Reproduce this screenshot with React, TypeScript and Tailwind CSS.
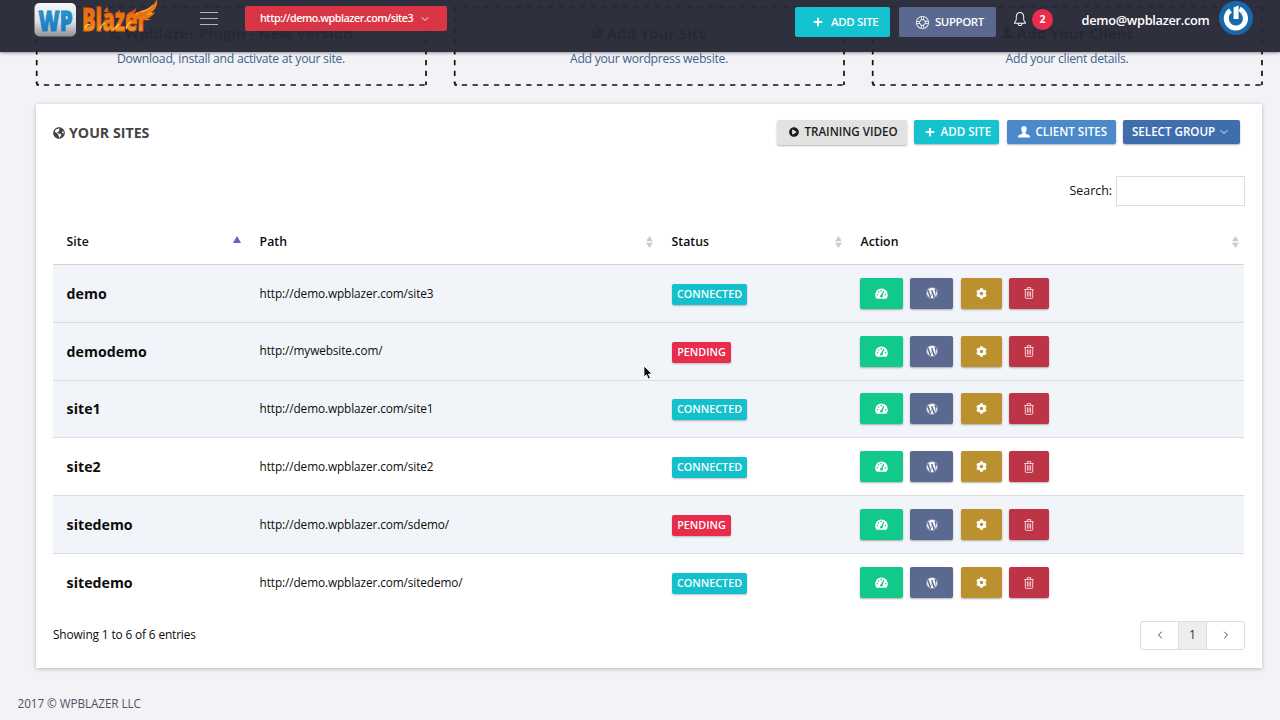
import React from "react";
import { FaPlus, FaWordpress, FaCog, FaPlayCircle, FaGlobeAmericas, FaDownload } from "react-icons/fa";
import { SlSupport, SlBell } from "react-icons/sl";

function Logo() {
  return (
    <svg className="block h-[40px] w-[126px] shrink-0 overflow-visible" viewBox="0 0 126 40" aria-label="WP Blazer">
      <defs>
        <linearGradient id="tile" x1="0" y1="0" x2="0" y2="1">
          <stop offset="0" stopColor="#f4f5f6" />
          <stop offset="0.55" stopColor="#dfe1e3" />
          <stop offset="1" stopColor="#909296" />
        </linearGradient>
        <linearGradient id="blue" x1="0" y1="0" x2="0" y2="1">
          <stop offset="0" stopColor="#2fa0dc" />
          <stop offset="1" stopColor="#1672b8" />
        </linearGradient>
        <linearGradient id="fire" x1="0" y1="0" x2="0" y2="1">
          <stop offset="0" stopColor="#e2600f" />
          <stop offset="0.6" stopColor="#f07a12" />
          <stop offset="1" stopColor="#fbb52a" />
        </linearGradient>
      </defs>
      <rect x="0.5" y="3" width="41.5" height="33.500" rx="5" fill="url(#tile)" />
      <path d="M98 18 C101 11 108 11 113 9 C118 7 121 3 123 -1 C124 6 121 10 117 13 L121 12 C119 16 116 17 113 19 L117 19 C114 21 112 20 110 20 L98 18 Z" fill="#ee7414" />
      <path d="M92 16 C94 11 99 12 102 8 C102 14 98 15 97 19 Z" fill="#d94e10" />
      <path d="M100 16 C104 11 111 13 119 5 M106 16 C109 14 113 15 118 13" stroke="#ffc33c" strokeWidth="1" fill="none" />
      <path d="M70 12 q1 -4 4 -5 q-1 3 1 5 M82 15 q1 -4 4 -5 q-1 3 1 5" fill="#e2600f" />
      <text x="4.500" y="31" fontFamily="'Open Sans',sans-serif" fontWeight="800" fontSize="28" textLength="34" lengthAdjust="spacingAndGlyphs" fill="url(#blue)" stroke="#1b80c4" strokeWidth="0.900">WP</text>
      <g fontFamily="'Open Sans',sans-serif" fontWeight="800" fill="url(#fire)" stroke="#e06411" strokeWidth="0.900">
        <text x="48" y="31" fontSize="31" textLength="65" lengthAdjust="spacingAndGlyphs">Blazer</text>
      </g>
      <path d="M51 28 q2 -5 5 -3 M66 29 q2 -5 5 -6 M79 30 l6 -6 M92 29 q1 -5 5 -7" stroke="#ffd04a" strokeWidth="1.200" fill="none" />
    </svg>
  );
}

function Chevron({ className }: { className: string }) {
  return (
    <svg className={className} viewBox="0 0 8 8" fill="none" stroke="currentColor" strokeWidth="0.900" strokeLinecap="round">
      <path d="M1 2.500 4 5.500 7 2.500" />
    </svg>
  );
}

function PersonIcon({ className }: { className: string }) {
  return (
    <svg className={className} viewBox="0 0 12 12" fill="currentColor">
      <path d="M6 0C4.200 0 3.300 1.300 3.300 3.100c0 1.300.5 2.500 1.200 3.300.2.6.1 1.100-.4 1.400L1.200 9C.4 9.400 0 10 0 11v.6h12V11c0-1-.4-1.600-1.200-2L7.900 7.800c-.5-.3-.6-.8-.4-1.400.7-.8 1.200-2 1.200-3.300C8.700 1.300 7.800 0 6 0Z" />
    </svg>
  );
}

function GaugeIcon() {
  return (
    <svg className="h-[11px] w-[13px]" viewBox="0 0 13 11">
      <path d="M6.500 .5A6.300 6.300 0 0 0 .2 6.800c0 1.300.3 2.400.9 3.400.3.300.6.500 1 .500h8.800c.4 0 .7-.2 1-.5.600-1 .900-2.100.900-3.400A6.300 6.300 0 0 0 6.500 .5Z" fill="#fff" />
      <g fill="#10c98b">
        <circle cx="2.500" cy="6.800" r=".8" />
        <circle cx="3.600" cy="4" r=".8" />
        <circle cx="6.200" cy="2.600" r=".8" />
        <circle cx="10.500" cy="6.800" r=".8" />
        <circle cx="6.400" cy="8.200" r="1.300" />
        <path d="M5.900 7.600 8.300 2.800l1 .4-2 5Z" />
      </g>
    </svg>
  );
}

function TrashIcon() {
  return (
    <svg className="h-[12px] w-[10px]" viewBox="0 0 10 12" fill="none" stroke="#f9dfe3" strokeWidth="0.900">
      <path d="M.3 2.500h9.400M3.300 2.300V.6h3.400v1.700M1.300 2.700v7.800c0 .5.300.9.800.9h5.800c.5 0 .8-.4.800-.9V2.700M3.400 4.300v5.300M5 4.300v5.300M6.600 4.300v5.300" />
    </svg>
  );
}

function Sorter() {
  return (
    <svg className="h-[12px] w-[7px]" viewBox="0 0 7 12" fill="#ccc">
      <path d="M3.500 0 7 5.300H0ZM0 6.700h7L3.500 12Z" />
    </svg>
  );
}

function DashedFrame() {
  return (
    <svg className="pointer-events-none absolute inset-0 h-[80px] w-[392px]" viewBox="0 0 392 80" fill="none" stroke="#111" strokeWidth="1.700" strokeDasharray="5.300 5.430">
      <path d="M1.500 1H391" strokeDashoffset="3.400" />
      <path d="M1.500 79H391" strokeDashoffset="3.400" />
      <path d="M1.700 1V77" strokeDashoffset="0.600" />
      <path d="M391 1V79" strokeDashoffset="0.600" />
      <path d="M1.500 76q0 2.500 2.500 3" strokeDasharray="none" />
    </svg>
  );
}

const promos = [
  { icon: "download", title: "Wpblazer Plugin - New Version", text: "Download, install and activate at your site." },
  { icon: "globe", title: "Add Your Site", text: "Add your wordpress website." },
  { icon: "person", title: "Add Your Client", text: "Add your client details." },
];

const sites = [
  { name: "demo", path: "http://demo.wpblazer.com/site3", connected: true, shaded: true },
  { name: "demodemo", path: "http://mywebsite.com/", connected: false, shaded: true },
  { name: "site1", path: "http://demo.wpblazer.com/site1", connected: true, shaded: true },
  { name: "site2", path: "http://demo.wpblazer.com/site2", connected: true, shaded: false },
  { name: "sitedemo", path: "http://demo.wpblazer.com/sdemo/", connected: false, shaded: true },
  { name: "sitedemo", path: "http://demo.wpblazer.com/sitedemo/", connected: true, shaded: false },
];

const columns = "grid grid-cols-[193px_412px_189px_397px]";
const headCell = "flex items-center justify-between pr-[5px] pl-[13.600px]";
const action = "flex h-[31px] items-center justify-center rounded-[2px] text-white shadow-[0_1px_2px_rgba(0,0,0,0.3)]";

export default function App() {
  return (
    <div className="relative h-[720px] w-[1280px] overflow-hidden bg-[#f2f2f7] font-['Open_Sans',sans-serif] text-[12.300px] text-[#0c0c0c]">
      <header className="absolute inset-x-0 top-0 z-10 flex h-[52px] items-start bg-[#262835]/96 pl-[34px] text-white shadow-[0_1px_3px_rgba(0,0,0,0.4)]">
        <Logo />
        <div className="mt-[12px] ml-[40px] flex h-[13px] w-[18px] flex-col justify-between">
          <span className="h-px bg-[#b4b6bd]" />
          <span className="h-px bg-[#b4b6bd]" />
          <span className="h-px bg-[#b4b6bd]" />
        </div>
        <button className="mt-[6px] ml-[27px] flex h-[25px] w-[202px] items-center rounded-[2px] bg-[#d93544] pl-[15px] text-[10.800px] font-semibold tracking-[-0.500px]">
          <span className="w-[153px] text-left whitespace-nowrap">http://demo.wpblazer.com/site3</span>
          <Chevron className="ml-[8px] size-[8px]" />
        </button>
        <button className="mt-[7px] ml-[348px] flex h-[30px] w-[95px] items-center rounded-[2px] bg-[#14c3cf] pl-[18px] text-[11.500px] font-semibold tracking-[-0.350px]">
          <FaPlus className="mr-[8px] size-[10px]" />
          <span className="whitespace-nowrap">ADD SITE</span>
        </button>
        <button className="mt-[7px] ml-[9px] flex h-[30px] w-[97px] items-center rounded-[2px] bg-[#5b6990] pl-[17px] text-[11.500px] font-semibold tracking-[-0.450px]">
          <SlSupport className="mr-[6px] size-[13px]" />
          <span className="whitespace-nowrap">SUPPORT</span>
        </button>
        <SlBell className="mt-[12px] ml-[17px] size-[14px]" />
        <span className="mt-[9px] ml-[5px] flex size-[21px] items-center justify-center rounded-full bg-[#ed2b4c] text-[10.500px] font-bold">2</span>
        <span className="mt-[11px] ml-[28.500px] w-[130px] text-[12.800px] leading-[18px] font-semibold tracking-[-0.300px] whitespace-nowrap">demo@wpblazer.com</span>
        <svg className="mt-[1px] ml-[7.500px] size-[34px]" viewBox="0 0 34 34">
          <circle cx="17" cy="17" r="17" fill="#1769ab" />
          <path d="M11.500 9.500A9.600 9.600 0 1 0 24 11" fill="none" stroke="#fff" strokeWidth="5" />
          <path d="M24 11Q22.500 8.800 20.500 8" fill="none" stroke="#fff" strokeWidth="5" />
          <path d="M14.600 6.500l5-2v13.500h-5Z" fill="#fff" />
        </svg>
      </header>

      <section className="flex gap-[26px] pt-[6px] pl-[35px]">
        {promos.map((p) => (
          <div key={p.title} className="relative h-[81px] w-[392px] shrink-0 pt-[17px] text-center">
            <DashedFrame />
            <h3 className="flex h-[20px] items-center justify-center gap-[4px] text-[15px] font-bold text-[#333]">
              {p.icon === "download" && <FaDownload className="size-[12px]" />}
              {p.icon === "globe" && <FaGlobeAmericas className="size-[12px]" />}
              {p.icon === "person" && <PersonIcon className="size-[12px]" />}
              {p.title}
            </h3>
            <p className="mt-[7px] text-[12.200px] leading-[18px] tracking-[-0.260px] text-[#3f628a]">{p.text}</p>
          </div>
        ))}
      </section>

      <main className="mt-[17px] ml-[36px] flex h-[564px] w-[1226px] flex-col bg-white px-[17px] shadow-[0_1px_4px_rgba(0,0,0,0.25)]">
        <div className="flex h-[72px] items-start pt-[16px]">
          <h2 className="flex h-[25px] flex-1 items-center gap-[4px] text-[14.200px] font-bold text-[#444]">
            <FaGlobeAmericas className="size-[12px]" />
            YOUR SITES
          </h2>
          <div className="flex pr-[5px] text-[11.600px] font-semibold text-white">
            <button className="flex h-[25px] w-[130px] items-center rounded-[2px] bg-[#e3e2e2] pb-[1px] pl-[12px] whitespace-nowrap text-[#1c1c1c] shadow-[0_1px_2px_rgba(0,0,0,0.3)]">
              <FaPlayCircle className="mr-[5.500px] size-[10px]" />
              TRAINING VIDEO
            </button>
            <button className="ml-[7px] flex h-[24px] w-[85px] items-center rounded-[2px] bg-[#14c3cf] pl-[11px] whitespace-nowrap shadow-[0_1px_2px_rgba(0,0,0,0.3)]">
              <FaPlus className="mr-[5.500px] size-[10px]" />
              ADD SITE
            </button>
            <button className="ml-[8px] flex h-[24px] w-[109px] items-center rounded-[2px] bg-[#4a89ca] pl-[11px] whitespace-nowrap shadow-[0_1px_2px_rgba(0,0,0,0.3)]">
              <PersonIcon className="mr-[5.500px] size-[12px]" />
              CLIENT SITES
            </button>
            <button className="ml-[7px] flex h-[24px] w-[117px] items-center rounded-[2px] bg-[#3f6eaf] pl-[9px] whitespace-nowrap shadow-[0_1px_2px_rgba(0,0,0,0.3)]">
              SELECT GROUP
              <Chevron className="ml-[5px] size-[8px]" />
            </button>
          </div>
        </div>

        <label className="flex h-[30px] items-center justify-end gap-[4px]">
          <span className="text-[12.400px]">Search:</span>
          <input className="h-[30px] w-[129px] border border-[#ddd] bg-white outline-none" />
        </label>

        <div className="mt-[13px] w-[1191px]">
          <div className={`${columns} h-[46px] items-center border-b border-[#d2d4d6] pt-[1px] font-semibold`}>
            <div className={headCell}>
              Site
              <svg className="mb-[6px] h-[7px] w-[8px]" viewBox="0 0 8 7" fill="#6b5fc0"><path d="M4 0 8 7H0Z" /></svg>
            </div>
            <div className={headCell}>Path<Sorter /></div>
            <div className={headCell}>Status<Sorter /></div>
            <div className={headCell}>Action<Sorter /></div>
          </div>
          {sites.map((s, i) => (
            <div key={i} className={`${columns} h-[57.800px] items-center border-b border-[#d8dbe0] last:border-b-0 ${s.shaded ? "bg-[#f1f5f9]" : "bg-white"}`}>
              <div className="pl-[13.600px] text-[14.200px] font-bold">{s.name}</div>
              <div className="pl-[13.600px] text-[11.800px] tracking-[-0.100px]">{s.path}</div>
              <div className="flex pt-[2px] pl-[14px]">
                <span className={`flex h-[21px] items-center justify-center rounded-[2px] pb-[1px] text-[10.800px] font-semibold text-white shadow-[0_1px_2px_rgba(0,0,0,0.25)] ${s.connected ? "w-[75px] bg-[#14c0cc]" : "w-[59px] bg-[#e72c4c]"}`}>
                  {s.connected ? "CONNECTED" : "PENDING"}
                </span>
              </div>
              <div className="flex pl-[13px]">
                <button className={`${action} w-[43px] bg-[#10c98b]`}><GaugeIcon /></button>
                <button className={`${action} ml-[7px] w-[43px] bg-[#5b6990]`}><FaWordpress className="size-[12px]" /></button>
                <button className={`${action} ml-[8px] w-[41px] bg-[#bb912f]`}><FaCog className="size-[11px]" /></button>
                <button className={`${action} ml-[7px] w-[40px] bg-[#be3447]`}><TrashIcon /></button>
              </div>
            </div>
          ))}
        </div>

        <div className="mt-[9px] flex h-[29px] items-center justify-between">
          <span className="pb-[1px] text-[11.900px] tracking-[-0.150px]">Showing 1 to 6 of 6 entries</span>
          <div className="flex h-[29px] w-[105px] overflow-hidden rounded-[3px] border border-[#ddd] text-[#333]">
            <button className="flex w-[37px] items-center justify-center"><Chevron className="size-[8px] rotate-90" /></button>
            <button className="flex w-[29px] items-center justify-center border-x border-[#ddd] bg-[#eee]">1</button>
            <button className="flex flex-1 items-center justify-center"><Chevron className="size-[8px] -rotate-90" /></button>
          </div>
        </div>
      </main>

      <footer className="mt-[26px] ml-[17.500px] text-[11.700px] leading-[18px] tracking-[-0.050px] text-[#4c5264]">2017 © WPBLAZER LLC</footer>

      <svg className="absolute top-[365px] left-[643px] z-20 h-[15px] w-[10px]" viewBox="0 0 10 15">
        <path d="M1 1v11l2.500-2.300 1.800 4.300 2-.9-1.800-4.100H9Z" fill="#000" stroke="#fff" strokeWidth=".8" />
      </svg>
    </div>
  );
}
